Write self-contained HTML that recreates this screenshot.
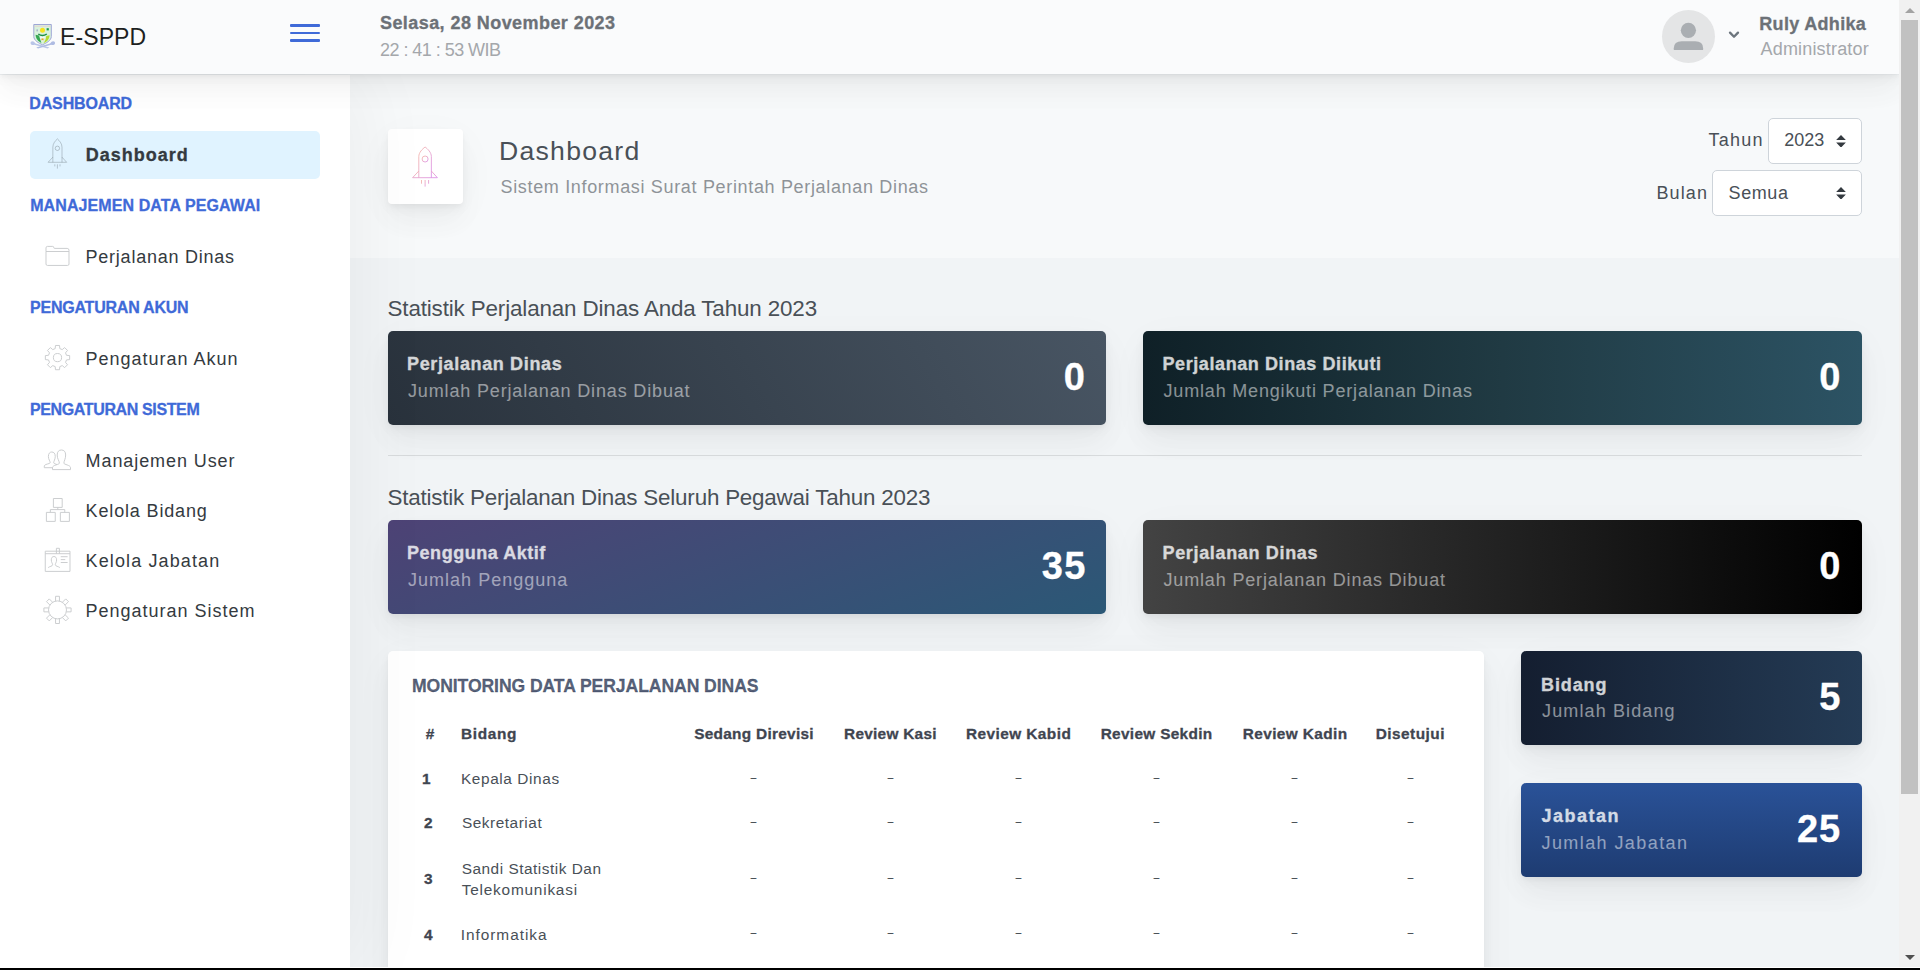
<!DOCTYPE html>
<html lang="id">
<head>
<meta charset="utf-8">
<title>E-SPPD - Dashboard</title>
<style>
*{box-sizing:border-box;margin:0;padding:0}
html,body{width:1920px;height:970px;overflow:hidden}
body{font-family:"Liberation Sans",sans-serif;font-size:18px;color:#495057;background:#f1f4f6;position:relative;line-height:1.5}
.sh{box-shadow:0 9.4px 43.75px rgba(4,9,20,.03),0 18.75px 28px rgba(4,9,20,.03),0 5px 10.6px rgba(4,9,20,.04),0 2.5px 3.75px rgba(4,9,20,.025)}
/* ---------- header ---------- */
.app-header{position:absolute;left:0;top:0;width:1899px;height:74px;background:#fafbfc;z-index:10}
.logo{position:absolute;left:30px;top:24px;width:26px;height:25px}
.brand{position:absolute;left:60px;top:23px;font-size:23px;line-height:26px;color:#1d1f21;letter-spacing:.3px;white-space:nowrap}
.hamburger{position:absolute;left:290px;top:24.4px;width:30px;height:19px}
.hamburger i{position:absolute;left:0;width:30px;height:2.3px;background:#3f6ad8;border-radius:1px}
.hdate{position:absolute;left:380px;top:12px;font-weight:bold;color:#6c7177;white-space:nowrap;line-height:22px}
.htime{position:absolute;left:380px;top:39px;color:#a4a7ab;white-space:nowrap;line-height:22px}
.avatar{position:absolute;left:1662px;top:10px;width:53px;height:53px;border-radius:50%;background:#e4e5e6;overflow:hidden}
.chev{position:absolute;left:1728px;top:30px;width:12px;height:10px}
.uname{position:absolute;left:1760px;top:13px;font-weight:bold;color:#6c7177;white-space:nowrap;line-height:22px}
.urole{position:absolute;left:1760px;top:38px;color:#a4a7ab;white-space:nowrap;line-height:22px}
/* ---------- sidebar ---------- */
.app-sidebar{position:absolute;left:0;top:75px;width:350px;height:895px;background:#fff;box-shadow:9px 0 75px rgba(0,0,0,.05);z-index:5}
.shead{position:absolute;left:30px;font-size:16px;font-weight:bold;color:#3f6ad8;white-space:nowrap;line-height:20px;text-transform:uppercase}
.sitem{position:absolute;left:30px;width:290px;height:48px;border-radius:5px;color:#343a40;white-space:nowrap;font-size:18px}
.sitem.active{background:#e0f3ff;font-weight:bold}
.sitem span{position:absolute;left:56px;top:0;line-height:48px}
.sitem svg{position:absolute;left:0;top:0;width:80px;height:48px;overflow:visible;fill:none;stroke:#c9cbcd;stroke-width:.95}
/* ---------- main ---------- */
.app-main{position:absolute;left:350px;top:75px;width:1549px;height:895px;overflow:hidden}
.page-title{position:absolute;left:0;top:0;width:1549px;height:183px;background:rgba(255,255,255,.45)}
.pt-icon{position:absolute;left:38px;top:54px;width:75px;height:75px;background:#fff;border-radius:4px}
.pt-head{position:absolute;left:150px;top:57px;font-size:26.6px;font-weight:normal;line-height:38px;color:#495057;white-space:nowrap}
.pt-sub{position:absolute;left:150px;top:98px;line-height:26px;color:#495057;opacity:.6;white-space:nowrap}
.flabel{position:absolute;color:#495057;white-space:nowrap;line-height:26px}
.fsel{position:absolute;height:46.5px;background:#fff;border:1px solid #ced4da;border-radius:5px;color:#495057}
.fsel span{position:absolute;left:15px;top:0;line-height:44px;white-space:nowrap}
.fsel svg{position:absolute;right:15px;top:16px;width:10px;height:12.6px}
.stitle{position:absolute;left:38px;font-size:22.4px;font-weight:normal;line-height:30px;color:#495057;white-space:nowrap}
.hr{position:absolute;left:38px;top:380px;width:1474px;height:1px;background:rgba(0,0,0,.1)}
.wcard{position:absolute;height:94px;border-radius:5px;color:#fff}
.wcard .wh{position:absolute;left:20px;top:20px;font-weight:bold;opacity:.8;white-space:nowrap;line-height:26px}
.wcard .ws{position:absolute;left:20px;top:46px;opacity:.5;white-space:nowrap;line-height:26px}
.wcard .wn{position:absolute;right:20px;top:20px;font-weight:bold;font-size:38px;line-height:54px;white-space:nowrap}
.g1{background:linear-gradient(60deg,#29323c 0%,#485563 100%)}
.g2{background:linear-gradient(to right,#0f2027,#203a43,#2c5364)}
.g3{background:linear-gradient(-20deg,#2b5876 0%,#4e4376 100%)}
.g4{background:linear-gradient(to right,#434343 0%,#000 100%)}
.g5{background:linear-gradient(to right,#141e30,#243b55)}
.g6{background:linear-gradient(to top,#1e3c72 0%,#1e3c72 1%,#2a5298 100%)}
.mcard{position:absolute;left:38px;top:576px;width:1096px;height:400px;background:#fff;border-radius:5px}
.ctitle{position:absolute;left:25px;top:21px;font-size:17.6px;font-weight:bold;color:rgba(13,27,62,.7);white-space:nowrap;line-height:26px;text-transform:uppercase}
table{position:absolute;left:25px;top:62px;border-collapse:collapse;table-layout:fixed;width:1046px}
th,td{height:44px;padding:0;text-align:center;vertical-align:middle;line-height:22px;font-size:15.4px;font-weight:normal;color:#495057;white-space:nowrap}
th{font-weight:bold;color:#3f4550}
th.l,td.l{text-align:left;padding-left:11px}
tr.two td,tr.two th{height:67px}
.d{display:inline-block;transform:translateY(-1.5px) scale(1.55,.75);color:#40464d}
/* ---------- scrollbar ---------- */
.sbar{position:absolute;left:1899px;top:0;width:21px;height:970px;background:#f1f1f1;z-index:20}
.sbar .thumb{position:absolute;left:2px;top:20px;width:17px;height:774px;background:#c1c1c1}
.sbar .up{position:absolute;left:5.5px;top:8px;width:0;height:0;border-left:5px solid transparent;border-right:5px solid transparent;border-bottom:5px solid #a3a3a3}
.sbar .dn{position:absolute;left:5.5px;top:955px;width:0;height:0;border-left:5px solid transparent;border-right:5px solid transparent;border-top:5px solid #505050}
.bline{position:absolute;left:0;top:967px;width:1920px;height:3px;background:#000;border-top:1px solid #fff;z-index:30}
.hdate,.uname,.shead,.sitem.active,.wh,.wn,.ctitle,th{-webkit-text-stroke:.3px currentColor}
/*FIT*/
.m.m.t0{letter-spacing:0.096px;left:60.00px!important;right:auto;top:24.00px!important}
.m.m.t1{letter-spacing:0.429px;left:380.00px!important;right:auto;top:12.00px!important}
.m.m.t2{letter-spacing:-0.537px;left:380.00px!important;right:auto;top:39.00px!important}
.m.m.t3{letter-spacing:0.319px;left:1759.30px!important;right:auto;top:13.00px!important}
.m.m.t4{letter-spacing:0.180px;left:1760.50px!important;right:auto;top:38.00px!important}
.m.m.t5{letter-spacing:-0.143px;left:29.30px!important;right:auto;top:19.00px!important}
.m.m.t6{letter-spacing:0.985px;left:55.80px!important;right:auto;top:0.00px!important}
.m.m.t7{letter-spacing:0.090px;left:30.20px!important;right:auto;top:121.00px!important}
.m.m.t8{letter-spacing:0.754px;left:55.60px!important;right:auto;top:0.00px!important}
.m.m.t9{letter-spacing:-0.222px;left:30.00px!important;right:auto;top:223.00px!important}
.m.m.t10{letter-spacing:0.979px;left:55.60px!important;right:auto;top:0.00px!important}
.m.m.t11{letter-spacing:-0.374px;left:30.00px!important;right:auto;top:325.00px!important}
.m.m.t12{letter-spacing:0.911px;left:55.60px!important;right:auto;top:0.00px!important}
.m.m.t13{letter-spacing:0.844px;left:55.60px!important;right:auto;top:0.00px!important}
.m.m.t14{letter-spacing:1.117px;left:55.60px!important;right:auto;top:0.00px!important}
.m.m.t15{letter-spacing:0.988px;left:55.60px!important;right:auto;top:0.00px!important}
.m.m.t16{letter-spacing:1.274px;left:149.00px!important;right:auto;top:57.00px!important}
.m.m.t17{letter-spacing:0.666px;left:150.50px!important;right:auto;top:99.00px!important}
.m.m.t18{letter-spacing:1.242px;left:1358.50px!important;right:auto;top:52.00px!important}
.m.m.t19{letter-spacing:0.023px;left:15.20px!important;right:auto;top:-0.50px!important}
.m.m.t20{letter-spacing:1.143px;left:1306.40px!important;right:auto;top:105.00px!important}
.m.m.t21{letter-spacing:0.620px;left:15.50px!important;right:auto;top:0.50px!important}
.m.m.t22{letter-spacing:-0.138px;left:37.50px!important;right:auto;top:219.00px!important}
.m.m.t23{letter-spacing:0.643px;left:19.00px!important;right:auto;top:20.00px!important}
.m.m.t24{letter-spacing:0.843px;left:20.00px!important;right:auto;top:47.00px!important}
.m.m.t25{left:675.75px!important;right:auto;top:19.00px!important}
.m.m.t26{letter-spacing:0.584px;left:19.50px!important;right:auto;top:20.00px!important}
.m.m.t27{letter-spacing:0.824px;left:20.50px!important;right:auto;top:47.00px!important}
.m.m.t28{left:676.25px!important;right:auto;top:19.00px!important}
.m.m.t29{letter-spacing:-0.203px;left:37.50px!important;right:auto;top:408.00px!important}
.m.m.t30{letter-spacing:0.538px;left:19.00px!important;right:auto;top:20.00px!important}
.m.m.t31{letter-spacing:1.015px;left:20.00px!important;right:auto;top:47.00px!important}
.m.m.t32{letter-spacing:1.366px;left:653.70px!important;right:auto;top:19.00px!important}
.m.m.t33{letter-spacing:0.663px;left:19.50px!important;right:auto;top:20.00px!important}
.m.m.t34{letter-spacing:0.840px;left:20.50px!important;right:auto;top:47.00px!important}
.m.m.t35{left:676.25px!important;right:auto;top:19.00px!important}
.m.m.t36{letter-spacing:-0.090px;left:24.00px!important;right:auto;top:22.00px!important}
.m.m.t37{position:relative;left:1.80px;top:-1.00px}
.m.m.t38{letter-spacing:0.649px;position:relative;left:-0.69px;top:-1.00px}
.m.m.t39{letter-spacing:0.279px;position:relative;left:0.11px;top:-1.00px}
.m.m.t40{letter-spacing:0.270px;position:relative;left:0.02px;top:-1.00px}
.m.m.t41{letter-spacing:0.430px;position:relative;left:-0.16px;top:-1.00px}
.m.m.t42{letter-spacing:0.302px;position:relative;left:-0.25px;top:-1.00px}
.m.m.t43{letter-spacing:0.389px;position:relative;left:0.47px;top:-1.00px}
.m.m.t44{letter-spacing:0.473px;position:relative;left:-0.00px;top:-1.00px}
.m.m.t45{position:relative;left:-2.00px;top:0.00px}
.m.m.t46{letter-spacing:0.595px;position:relative;left:-0.69px;top:0.00px}
.m.m.t47{position:relative;left:0.00px;top:0.00px}
.m.m.t48{letter-spacing:0.526px;position:relative;left:0.31px;top:0.00px}
.m.m.t49{position:relative;left:0.00px;top:0.50px}
.m.m.t50{letter-spacing:0.513px;position:relative;left:0.01px;top:1.50px}
.m.m.t51{letter-spacing:0.785px;position:relative;left:0.01px;top:0.50px}
.m.m.t52{position:relative;left:0.00px;top:1.00px}
.m.m.t53{letter-spacing:0.973px;position:relative;left:-0.99px;top:1.00px}
.m.m.t54{letter-spacing:0.880px;left:20.00px!important;right:auto;top:21.00px!important}
.m.m.t55{letter-spacing:1.128px;left:21.00px!important;right:auto;top:47.00px!important}
.m.m.t56{left:298.30px!important;right:auto;top:19.00px!important}
.m.m.t57{letter-spacing:1.495px;left:20.50px!important;right:auto;top:20.00px!important}
.m.m.t58{letter-spacing:1.418px;left:20.50px!important;right:auto;top:47.00px!important}
.m.m.t59{letter-spacing:0.966px;left:275.90px!important;right:auto;top:19.00px!important}
/*ENDFIT*/
</style>
</head>
<body>

<!-- HEADER -->
<header class="app-header sh">
  <svg class="logo" viewBox="0 0 26 25"><path d="M3.8 0.5H21.3V12.5C21.3 16.5 16 19.3 12.5 20.8C9 19.3 3.8 16.5 3.8 12.5Z" fill="#d9f2dc" stroke="#9ea6d6" stroke-width="1"/><path d="M4.6 2.2H20.5" stroke="#e9c9cf" stroke-width=".8"/><circle cx="12.5" cy="6.3" r="2.5" fill="#f6e21f"/><path d="M9.6 12.4L12.5 17.6L15.4 12.4Z" fill="#f4fbf4"/><rect x="16.6" y="4.2" width="2.2" height="2.2" fill="#1f9a4c"/><rect x="6.4" y="5.4" width="1.6" height="2" fill="#a9b7c9"/><path d="M8.3 10C10 11.3 11.3 11.6 12.5 11.6C13.8 11.6 15 11.3 16.8 10" fill="none" stroke="#1c8f45" stroke-width="1.5"/><path d="M5.6 10.8C5.8 14.6 8.2 17.6 11.4 19C10.4 16.2 9.6 13.6 9 11.6Z" fill="#35a853"/><path d="M16.2 12C16 15 15 17.4 13.4 19.2C17 17.8 19.4 15 19.6 11.2Z" fill="#b4db33"/><rect x="11.4" y="14.4" width="2.2" height="1.8" fill="#e3a52e"/><path d="M.6 19.4C.2 17.4 2.6 16.4 4 17.8C4.6 18.6 5 19.2 5.6 19.6L19.4 23.6L17.6 24.6L4.4 20.8C2.8 21.4 1 20.8.6 19.4Z" fill="#b9c5e8"/><path d="M25 19.4C25.4 17.4 23 16.4 21.6 17.8C21 18.6 20.6 19.2 20 19.6L6.2 23.6L8 24.6L21.2 20.8C22.8 21.4 24.6 20.8 25 19.4Z" fill="#aebbe2"/></svg>
  <div class="brand m t0">E-SPPD</div>
  <div class="hamburger"><i style="top:0"></i><i style="top:7.5px"></i><i style="top:15px"></i></div>
  <div class="hdate m t1">Selasa, 28 November 2023</div>
  <div class="htime m t2">22 : 41 : 53 WIB</div>
  <div class="avatar"><svg viewBox="0 0 53 53" width="53" height="53"><circle cx="26.4" cy="20.3" r="7.6" fill="#aaaeb2"/><path d="M11.8 39.9V38.3Q11.8 31.3 19.8 31.3H33.1Q41.1 31.3 41.1 38.3V39.9Z" fill="#aaaeb2"/></svg></div>
  <svg class="chev" viewBox="0 0 12 10"><path d="M2 2.6L6 6.7L10 2.6" fill="none" stroke="#6c757d" stroke-width="2.3" stroke-linecap="round" stroke-linejoin="round"/></svg>
  <div class="uname m t3">Ruly Adhika</div>
  <div class="urole m t4">Administrator</div>
</header>

<!-- SIDEBAR -->
<nav class="app-sidebar">
  <div class="shead m t5" style="top:19px">DASHBOARD</div>
  <a class="sitem active" style="top:56px"><svg class="ic" viewBox="0 0 80 48" id="ic-rocket"><g stroke="#343a40" stroke-opacity=".27"><path d="M22.85 31.3V16.2C22.85 12.6 25.4 9.6 27.4 7.9C29.4 9.6 32 12.6 32 16.2V31.3"/><circle cx="27.4" cy="17.3" r="2.2"/><path d="M22.85 26.2L18.1 31.3H36.7L32 26.2"/><path d="M27.4 33.3V37.6M24.8 33.3V35.4M30 33.3V35.4"/></g></svg><span class="m t6">Dashboard</span></a>
  <div class="shead m t7" style="top:121px">MANAJEMEN DATA PEGAWAI</div>
  <a class="sitem" style="top:158px"><svg class="ic" viewBox="0 0 80 48" id="ic-folder"><path d="M16 18.5V14.9Q16 13.4 17.5 13.4H22.7Q23.7 13.4 23.7 14.4T24.7 15.4H37.2Q39 15.4 39 17.4V31Q39 32.45 37.5 32.45H17.5Q16 32.45 16 31V18.5H39"/></svg><span class="m t8">Perjalanan Dinas</span></a>
  <div class="shead m t9" style="top:223px">PENGATURAN AKUN</div>
  <a class="sitem" style="top:260px"><svg class="ic" viewBox="0 0 80 48" id="ic-gear"><path d="M25.20 13.59 L25.48 10.47 L29.52 10.47 L29.80 13.59 L32.24 14.60 L34.65 12.59 L37.51 15.45 L35.50 17.86 L36.51 20.30 L39.63 20.58 L39.63 24.62 L36.51 24.90 L35.50 27.34 L37.51 29.75 L34.65 32.61 L32.24 30.60 L29.80 31.61 L29.52 34.73 L25.48 34.73 L25.20 31.61 L22.76 30.60 L20.35 32.61 L17.49 29.75 L19.50 27.34 L18.49 24.90 L15.37 24.62 L15.37 20.58 L18.49 20.30 L19.50 17.86 L17.49 15.45 L20.35 12.59 L22.76 14.60Z"/><circle cx="27.5" cy="22.6" r="4.1"/></svg><span class="m t10">Pengaturan Akun</span></a>
  <div class="shead m t11" style="top:325px">PENGATURAN SISTEM</div>
  <a class="sitem" style="top:362px"><svg class="ic" viewBox="0 0 80 48" id="ic-users"><path d="M29.4 26.2C29.4 24 27.2 22 27.2 18C27.2 14.5 29 13 31.4 13C33.9 13 35.65 14.5 35.65 18C35.65 22 33.9 24 33.9 26.2C33.9 27.6 40.5 28 40.5 30.6V32.6H22.5V30.6C22.5 28 29.4 27.6 29.4 26.2Z"/><path d="M22.5 30.7H14.3V28.9C14.3 27 20.2 26.9 20.2 25.8C20.2 24.2 18.4 22.4 18.4 19.4C18.4 16.4 19.9 15 21.8 15C23.7 15 25.25 16.4 25.25 19.4C25.25 22.4 23.7 24.2 23.7 25.8C23.7 26.6 25.6 27 27 27.6"/></svg><span class="m t12">Manajemen User</span></a>
  <a class="sitem" style="top:412px"><svg class="ic" viewBox="0 0 80 48" id="ic-network"><path d="M23.4 11.5H32.2V20.4H23.4ZM16.4 25.4H25.25V34.4H16.4ZM30.35 25.4H39.4V34.4H30.35ZM27.8 20.4V22.6M20.35 25.4V22.6H34.75V25.4"/></svg><span class="m t13">Kelola Bidang</span></a>
  <a class="sitem" style="top:462px"><svg class="ic" viewBox="0 0 80 48" id="ic-id"><path d="M15.25 14.2H40V34.4H15.25ZM15.25 16.7H40M26.4 16.7V11.3H29.4V16.7M30.75 19.7H37.6M30.75 22.6H35.25M30.75 25.5H37.6"/><path d="M18.2 30.6C19.5 29.3 22.6 29.4 22.6 27.7C22.6 26.4 21.3 25.4 21.3 22.9C21.3 20.6 22.4 19.5 23.9 19.5C25.5 19.5 26.6 20.6 26.6 22.9C26.6 25.4 25.3 26.4 25.3 27.7C25.3 29.4 28.5 29.3 29.8 30.6"/></svg><span class="m t14">Kelola Jabatan</span></a>
  <a class="sitem" style="top:512px"><svg class="ic" viewBox="0 0 80 48" id="ic-config"><circle cx="27.5" cy="22.9" r="9"/><path d="M29.45 14.11 L29.45 9.30 L25.55 9.30 L25.55 14.11 M35.09 18.07 L38.50 14.66 L35.74 11.90 L32.33 15.31 M36.29 24.85 L41.10 24.85 L41.10 20.95 L36.29 20.95 M32.33 30.49 L35.74 33.90 L38.50 31.14 L35.09 27.73 M25.55 31.69 L25.55 36.50 L29.45 36.50 L29.45 31.69 M19.91 27.73 L16.50 31.14 L19.26 33.90 L22.67 30.49 M18.71 20.95 L13.90 20.95 L13.90 24.85 L18.71 24.85 M22.67 15.31 L19.26 11.90 L16.50 14.66 L19.91 18.07 "/></svg><span class="m t15">Pengaturan Sistem</span></a>
</nav>

<!-- MAIN -->
<main class="app-main">
  <section class="page-title">
    <div class="pt-icon sh"><svg viewBox="0 0 75 75" width="75" height="75" id="ic-bigrocket"><defs><linearGradient id="gmf" x1="0" y1="0" x2="1" y2="1"><stop offset="0" stop-color="#f5b5a4"/><stop offset="1" stop-color="#d98be8"/></linearGradient></defs><g fill="none" stroke="url(#gmf)" stroke-width=".85"><path d="M30.8 48.7V27.6C30.8 23.4 34.4 20 37.1 18C39.8 20 43.35 23.4 43.35 27.6V48.7"/><circle cx="37.1" cy="30" r="3"/><path d="M30.8 42L24.6 48.7H49.4L43.35 42"/><path d="M37.1 51V57.6M33.5 51V54.7M40.6 51V54.7"/></g></svg></div>
    <h1 class="pt-head m t16">Dashboard</h1>
    <div class="pt-sub m t17">Sistem Informasi Surat Perintah Perjalanan Dinas</div>
    <label class="flabel m t18" style="left:1358px;top:52px">Tahun</label>
    <div class="fsel" style="left:1418px;top:42.5px;width:94px"><span class="m t19">2023</span><svg viewBox="0 0 10 13"><path d="M5 0L10 5.2H0z M5 13L0 7.8H10z" fill="#343a40"/></svg></div>
    <label class="flabel m t20" style="left:1307px;top:105px">Bulan</label>
    <div class="fsel" style="left:1362px;top:94.5px;width:150px"><span class="m t21">Semua</span><svg viewBox="0 0 10 13"><path d="M5 0L10 5.2H0z M5 13L0 7.8H10z" fill="#343a40"/></svg></div>
  </section>

  <h5 class="stitle m t22" style="top:219px">Statistik Perjalanan Dinas Anda Tahun 2023</h5>
  <div class="wcard g1 sh" style="left:38px;top:256px;width:718px"><div class="wh m t23">Perjalanan Dinas</div><div class="ws m t24">Jumlah Perjalanan Dinas Dibuat</div><div class="wn m t25">0</div></div>
  <div class="wcard g2 sh" style="left:793px;top:256px;width:719px"><div class="wh m t26">Perjalanan Dinas Diikuti</div><div class="ws m t27">Jumlah Mengikuti Perjalanan Dinas</div><div class="wn m t28">0</div></div>
  <div class="hr"></div>
  <h5 class="stitle m t29" style="top:408px">Statistik Perjalanan Dinas Seluruh Pegawai Tahun 2023</h5>
  <div class="wcard g3 sh" style="left:38px;top:445px;width:718px"><div class="wh m t30">Pengguna Aktif</div><div class="ws m t31">Jumlah Pengguna</div><div class="wn m t32">35</div></div>
  <div class="wcard g4 sh" style="left:793px;top:445px;width:719px"><div class="wh m t33">Perjalanan Dinas</div><div class="ws m t34">Jumlah Perjalanan Dinas Dibuat</div><div class="wn m t35">0</div></div>

  <div class="mcard sh">
    <h5 class="ctitle m t36">MONITORING DATA PERJALANAN DINAS</h5>
    <table>
      <colgroup><col style="width:37.7px"><col style="width:228px"><col style="width:150.5px"><col style="width:122.4px"><col style="width:134.4px"><col style="width:141.7px"><col style="width:134px"><col style="width:97.3px"></colgroup>
      <thead><tr><th class="l"><span class="m t37">#</span></th><th class="l"><span class="m t38">Bidang</span></th><th><span class="m t39">Sedang Direvisi</span></th><th><span class="m t40">Review Kasi</span></th><th><span class="m t41">Review Kabid</span></th><th><span class="m t42">Review Sekdin</span></th><th><span class="m t43">Review Kadin</span></th><th><span class="m t44">Disetujui</span></th></tr></thead>
      <tbody>
        <tr><th class="l"><span class="m t45">1</span></th><td class="l"><span class="m t46">Kepala Dinas</span></td><td><span class="d">-</span></td><td><span class="d">-</span></td><td><span class="d">-</span></td><td><span class="d">-</span></td><td><span class="d">-</span></td><td><span class="d">-</span></td></tr>
        <tr><th class="l"><span class="m t47">2</span></th><td class="l"><span class="m t48">Sekretariat</span></td><td><span class="d">-</span></td><td><span class="d">-</span></td><td><span class="d">-</span></td><td><span class="d">-</span></td><td><span class="d">-</span></td><td><span class="d">-</span></td></tr>
        <tr class="two"><th class="l"><span class="m t49">3</span></th><td class="l"><span class="m t50">Sandi Statistik Dan</span><br><span class="m t51">Telekomunikasi</span></td><td><span class="d">-</span></td><td><span class="d">-</span></td><td><span class="d">-</span></td><td><span class="d">-</span></td><td><span class="d">-</span></td><td><span class="d">-</span></td></tr>
        <tr><th class="l"><span class="m t52">4</span></th><td class="l"><span class="m t53">Informatika</span></td><td><span class="d">-</span></td><td><span class="d">-</span></td><td><span class="d">-</span></td><td><span class="d">-</span></td><td><span class="d">-</span></td><td><span class="d">-</span></td></tr>
      </tbody>
    </table>
  </div>

  <div class="wcard g5 sh" style="left:1171px;top:576px;width:341px"><div class="wh m t54">Bidang</div><div class="ws m t55">Jumlah Bidang</div><div class="wn m t56">5</div></div>
  <div class="wcard g6 sh" style="left:1171px;top:708px;width:341px"><div class="wh m t57">Jabatan</div><div class="ws m t58">Jumlah Jabatan</div><div class="wn m t59">25</div></div>
</main>

<!-- SCROLLBAR -->
<div class="sbar"><div class="up"></div><div class="thumb"></div><div class="dn"></div></div>
<div class="bline"></div>
</body>
</html>
